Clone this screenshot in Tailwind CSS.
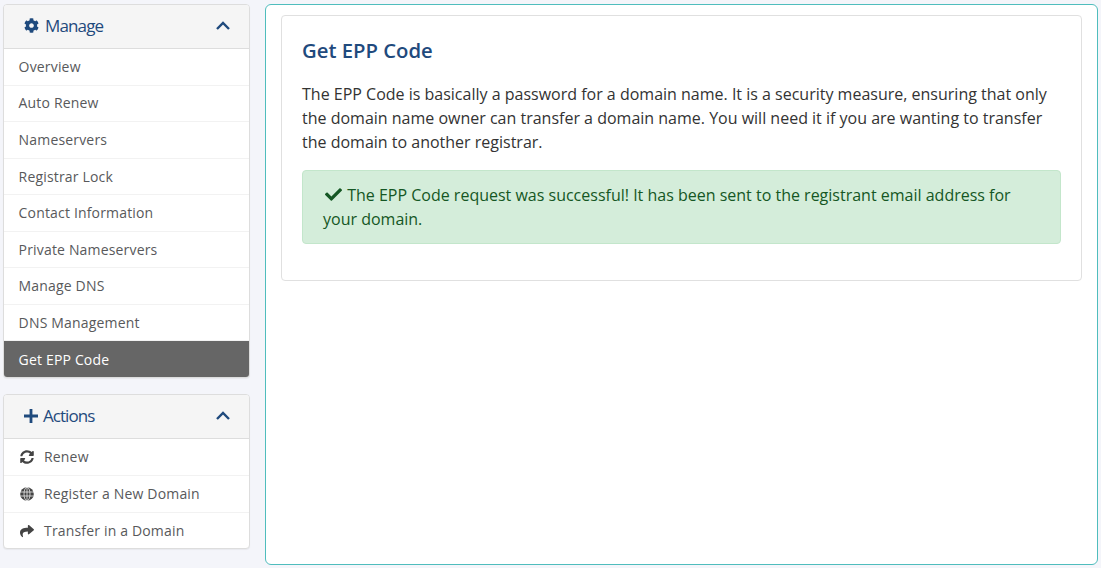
<!DOCTYPE html>
<html lang="en">
  <head>
    <meta charset="UTF-8" />
    <meta name="viewport" content="width=device-width, initial-scale=1.0" />
    <script src="https://cdn.jsdelivr.net/npm/@tailwindcss/browser@4"></script>
    <title>Get EPP Code</title>
  </head>

  <body class="bg-[#f4f5fa] h-[568px] overflow-hidden font-['Open_Sans',sans-serif] text-[#333]">
    <div class="flex items-start pt-1 pl-[3px]">
      <!-- Sidebar -->
      <div class="w-[247px] shrink-0">
        <div class="bg-white border border-[#ddd] rounded-[4px] shadow-[0_1px_1px_rgba(0,0,0,0.05)] overflow-hidden">
          <div class="h-11 bg-[#f5f5f5] border-b border-[#ddd] flex items-center justify-between pl-5 pr-[19px] pb-[2px] text-[#1f4a7d]">
            <div class="flex items-center gap-[6px] text-[17px] tracking-[-0.85px]">
              <svg class="w-[15px] h-[15px] fill-current" viewBox="0 0 512 512"><path d="M487.4 315.7l-42.6-24.6c4.3-23.2 4.3-47 0-70.2l42.6-24.6c4.9-2.8 7.1-8.6 5.5-14-11.1-35.6-30-67.8-54.7-94.6-3.8-4.1-10-5.1-14.8-2.3L380.8 110c-17.9-15.4-38.5-27.3-60.8-35.1V25.8c0-5.6-3.9-10.5-9.4-11.7-36.7-8.2-74.3-7.8-109.2 0-5.5 1.2-9.4 6.1-9.4 11.7V75c-22.2 7.9-42.8 19.8-60.8 35.1L88.7 85.5c-4.9-2.8-11-1.9-14.8 2.3-24.7 26.7-43.6 58.9-54.7 94.6-1.7 5.4.6 11.2 5.5 14L67.3 221c-4.3 23.2-4.3 47 0 70.2l-42.6 24.6c-4.9 2.8-7.1 8.6-5.5 14 11.1 35.6 30 67.8 54.7 94.6 3.8 4.1 10 5.1 14.8 2.3l42.6-24.6c17.9 15.4 38.5 27.3 60.8 35.1v49.2c0 5.6 3.9 10.5 9.4 11.7 36.7 8.2 74.3 7.8 109.2 0 5.5-1.2 9.4-6.1 9.4-11.7v-49.2c22.2-7.9 42.8-19.8 60.8-35.1l42.6 24.6c4.9 2.8 11 1.9 14.8-2.3 24.7-26.7 43.6-58.9 54.7-94.6 1.5-5.5-.7-11.3-5.6-14.1zM256 336c-44.1 0-80-35.9-80-80s35.9-80 80-80 80 35.9 80 80-35.9 80-80 80z" /></svg>
              <span>Manage</span>
            </div>
            <svg class="w-[14px] h-[9px] fill-none stroke-current stroke-[2.4]" viewBox="0 0 14 9"><path d="M1 8 L7 2 L13 8" /></svg>
          </div>
          <div class="text-sm tracking-[0.17px] text-[#58595b]">
            <div class="h-[36.5px] flex items-center px-[14.6px] pt-[0.5px] border-b border-[#f2f2f2]">Overview</div>
            <div class="h-[36.5px] flex items-center px-[14.6px] border-b border-[#f2f2f2]">Auto Renew</div>
            <div class="h-[36.5px] flex items-center px-[14.6px] pt-[0.5px] border-b border-[#f2f2f2]">Nameservers</div>
            <div class="h-[36.5px] flex items-center px-[14.6px] pt-[0.5px] border-b border-[#f2f2f2]">Registrar Lock</div>
            <div class="h-[36.5px] flex items-center px-[14.6px] pt-[0.5px] border-b border-[#f2f2f2]">Contact Information</div>
            <div class="h-[36.5px] flex items-center px-[14.6px] pt-[0.5px] border-b border-[#f2f2f2]">Private Nameservers</div>
            <div class="h-[36.5px] flex items-center px-[14.6px] pt-[0.5px] border-b border-[#f2f2f2]">Manage DNS</div>
            <div class="h-[36.5px] flex items-center px-[14.6px] pt-[0.5px] border-b border-[#f2f2f2]">DNS Management</div>
            <div class="h-9 flex items-center px-[14.6px] pt-[1px] bg-[#666] text-white">Get EPP Code</div>
          </div>
        </div>

        <div class="mt-4 bg-white border border-[#ddd] rounded-[4px] shadow-[0_1px_1px_rgba(0,0,0,0.05)] overflow-hidden">
          <div class="h-11 bg-[#f5f5f5] border-b border-[#ddd] flex items-center justify-between pl-5 pr-[19px] pb-[2px] text-[#1f4a7d]">
            <div class="flex items-center gap-[5px] text-[17px] tracking-[-0.95px]">
              <svg class="w-[14px] h-[14px] stroke-current stroke-[2.8] fill-none" viewBox="0 0 14 14"><path d="M0 7 H14 M7 0 V14" /></svg>
              <span>Actions</span>
            </div>
            <svg class="w-[14px] h-[9px] fill-none stroke-current stroke-[2.4]" viewBox="0 0 14 9"><path d="M1 8 L7 2 L13 8" /></svg>
          </div>
          <div class="text-sm tracking-[0.17px] text-[#58595b]">
            <div class="h-[37px] flex items-center pl-[16px] border-b border-[#f2f2f2]">
              <svg class="w-[14px] h-[14px] fill-[#444] shrink-0" viewBox="0 0 512 512"><path d="M370.72 133.28C339.458 104.008 298.888 87.962 255.848 88c-77.458.068-144.328 53.178-162.791 126.85-1.344 5.363-6.122 9.15-11.651 9.15H24.103c-7.498 0-13.194-6.807-11.807-14.176C33.933 94.924 134.813 8 256 8c66.448 0 126.791 26.136 171.315 68.685L463.03 40.97C478.149 25.851 504 36.559 504 57.941V192c0 13.255-10.745 24-24 24H345.941c-21.382 0-32.09-25.851-16.971-40.971l41.75-41.749zM32 296h134.059c21.382 0 32.09 25.851 16.971 40.971l-41.75 41.75c31.262 29.273 71.835 45.319 114.876 45.28 77.418-.07 144.315-53.144 162.787-126.849 1.344-5.363 6.122-9.15 11.651-9.15h57.304c7.498 0 13.194 6.807 11.807 14.176C478.067 417.076 377.187 504 256 504c-66.448 0-126.791-26.136-171.315-68.685L48.97 471.03C33.851 486.149 8 475.441 8 454.059V320c0-13.255 10.745-24 24-24z" /></svg>
              <span class="ml-[10px]">Renew</span>
            </div>
            <div class="h-[37px] flex items-center pl-[16px] border-b border-[#f2f2f2]">
              <svg class="w-[14px] h-[14px] shrink-0" viewBox="0 0 14 14"><circle cx="7" cy="7" r="6.8" fill="#444" /><path d="M0.5 5 H13.5 M0.5 9 H13.5 M7 0.5 V13.5" stroke="#fff" stroke-width="0.7" fill="none" /><ellipse cx="7" cy="7" rx="3" ry="6.8" fill="none" stroke="#fff" stroke-width="0.7" /></svg>
              <span class="ml-[10px]">Register a New Domain</span>
            </div>
            <div class="h-[35px] flex items-center pl-[16px] pt-px">
              <svg class="w-[14px] h-[14px] fill-[#444] shrink-0" viewBox="0 0 512 512"><path d="M503.691 189.836L327.687 37.851C312.281 24.546 288 35.347 288 56.015v80.053C127.371 137.907 0 170.1 0 322.326c0 61.441 39.581 122.309 83.333 154.132 13.653 9.931 33.111-2.533 28.077-18.631C66.066 312.814 132.917 274.316 288 272.085V360c0 20.7 24.3 31.453 39.687 18.164l176.004-152c11.071-9.562 11.086-26.753 0-36.328z" /></svg>
              <span class="ml-[10px]">Transfer in a Domain</span>
            </div>
          </div>
        </div>
      </div>

      <!-- Main -->
      <div class="ml-[15px] w-[833px] h-[561px] bg-white border border-[#4fbdbd] rounded-[6px] pt-[10px] px-[15px]">
        <div class="h-[266px] border border-[#e0e0e0] rounded-[4px] px-5 pt-[18px]">
          <h2 class="text-[20.3px] leading-[32px] font-semibold text-[#1f4a7d]">Get EPP Code</h2>
          <p class="mt-4 text-base leading-6 text-[#333]">The EPP Code is basically a password for a domain name. It is a security measure, ensuring that only the domain name owner can transfer a domain name. You will need it if you are wanting to transfer the domain to another registrar.</p>
          <div class="mt-4 h-[74px] bg-[#d4edda] border border-[#c3e6cb] rounded-[4px] px-5 py-3 text-base leading-6 text-[#155724]">
            <svg class="inline-block w-[17px] h-[17px] ml-[2px] mr-[1px] align-[-2px] fill-[#155724]" viewBox="0 0 512 512"><path d="M173.898 439.404l-166.4-166.4c-9.997-9.997-9.997-26.206 0-36.204l36.203-36.204c9.997-9.998 26.207-9.998 36.204 0L192 312.69 432.095 72.596c9.997-9.997 26.207-9.997 36.204 0l36.203 36.204c9.997 9.997 9.997 26.206 0 36.204l-294.4 294.401c-9.998 9.997-26.207 9.997-36.204-.001z" /></svg>
            The EPP Code request was successful! It has been sent to the registrant email address for your domain.
          </div>
        </div>
      </div>
    </div>
  </body>
</html>
